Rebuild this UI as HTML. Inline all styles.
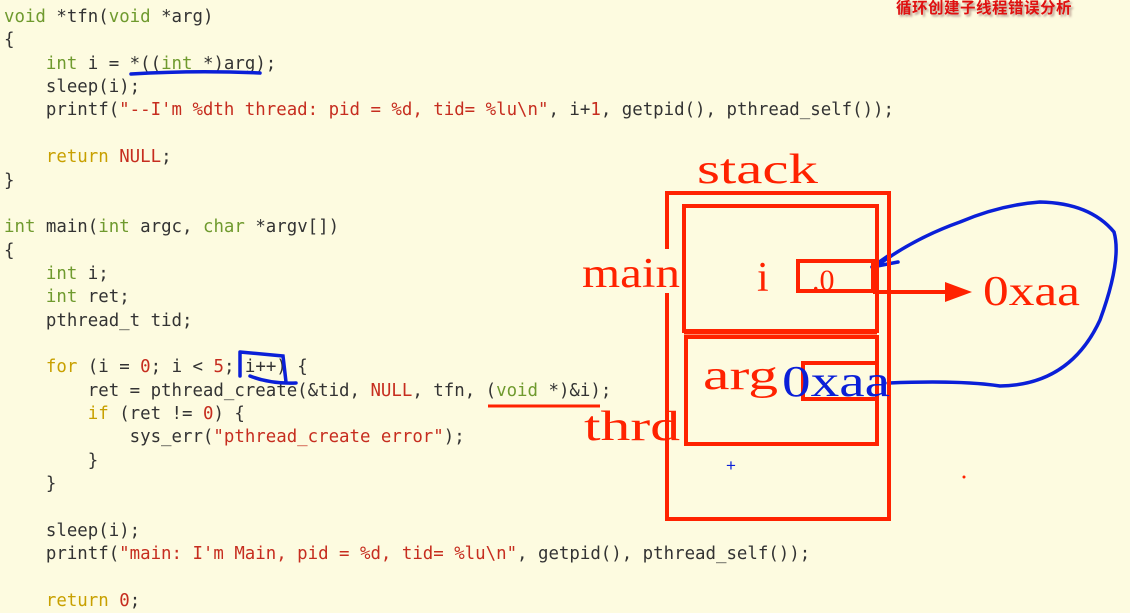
<!DOCTYPE html>
<html><head><meta charset="utf-8"><style>
html,body{margin:0;padding:0;}
body{width:1130px;height:610px;background:#fdfbe0;position:relative;overflow:hidden;}
pre{position:absolute;left:4px;top:6px;margin:0;font-family:"DejaVu Sans Mono","Liberation Mono",monospace;font-size:17.4px;line-height:23.36px;color:#333;}
.k{color:#6f9a2e}.r{color:#c8a000}.s{color:#c62d1f}
.t{position:absolute;left:896px;top:-4px;font-family:"Liberation Sans","Noto Sans CJK SC",sans-serif;font-size:15.5px;color:#e01010;text-shadow:2px 2px 2px rgba(120,60,60,.5);letter-spacing:0.5px;font-weight:bold;}
svg{position:absolute;left:0;top:0;}
</style></head><body>
<pre><span class="k">void</span> *tfn(<span class="k">void</span> *arg)
{
    <span class="k">int</span> i = *((<span class="k">int</span> *)arg);
    sleep(i);
    printf(<span class="s">"--I'm %dth thread: pid = %d, tid= %lu\n"</span>, i+<span class="s">1</span>, getpid(), pthread_self());

    <span class="r">return</span> <span class="s">NULL</span>;
}

<span class="k">int</span> main(<span class="k">int</span> argc, <span class="k">char</span> *argv[])
{
    <span class="k">int</span> i;
    <span class="k">int</span> ret;
    pthread_t tid;

    <span class="r">for</span> (i = <span class="s">0</span>; i &lt; <span class="s">5</span>; i++) {
        ret = pthread_create(&amp;tid, <span class="s">NULL</span>, tfn, (<span class="k">void</span> *)&amp;i);
        <span class="r">if</span> (ret != <span class="s">0</span>) {
            sys_err(<span class="s">"pthread_create error"</span>);
        }
    }

    sleep(i);
    printf(<span class="s">"main: I'm Main, pid = %d, tid= %lu\n"</span>, getpid(), pthread_self());

    <span class="r">return</span> <span class="s">0</span>;</pre>
<div class="t">循环创建子线程错误分析</div>
<svg width="1130" height="610" viewBox="0 0 1130 610">
<g fill="none" stroke="#0a1fd8" stroke-width="3.5" stroke-linecap="round">
<path d="M131 74 Q195 70 260 73"/>
<path d="M240 352 L240 376 M240 352 L283 356 L286 382 M250 376 Q270 384 296 383"/>
<path d="M888 383 Q960 380 1000 386 Q1070 385 1100 320 Q1122 260 1114 232 Q1090 203 1040 202 Q1000 205 960 222 Q915 238 878 265"/>
<path d="M872 267 L888 256 M872 267 L898 262"/>
</g>
<g fill="none" stroke="#ff2200" stroke-width="4">
<path d="M667 249 L667 193 L889 193 L889 519 L667 519 L667 293"/>
<rect x="684" y="206" width="193" height="125"/>
<rect x="686" y="337" width="191" height="107"/>
<path d="M684 332 L877 332" stroke-width="5"/>
<path d="M877 291 L798 291 L798 261 L873 261 L873 290"/>
<path d="M875 363 L803 363 L803 399 L875 399"/>
<path d="M873 292 L950 292"/>
<path d="M488 406 L600 406" stroke-width="3"/>
</g>
<path d="M945 282 L972 292 L945 302 Z" fill="#ff2200"/>
<g font-family="Liberation Serif, serif" fill="#ff2200">
<text x="697" y="183" font-size="42" textLength="121" lengthAdjust="spacingAndGlyphs">stack</text>
<text x="582" y="287" font-size="42" textLength="98" lengthAdjust="spacingAndGlyphs">main</text>
<text x="757" y="291" font-size="42">i</text>
<text x="812" y="290" font-size="30">.0</text>
<text x="983" y="305" font-size="42" textLength="97" lengthAdjust="spacingAndGlyphs">0xaa</text>
<text x="703" y="389" font-size="42" textLength="75" lengthAdjust="spacingAndGlyphs">arg</text>
<text x="584" y="440" font-size="42" textLength="96" lengthAdjust="spacingAndGlyphs">thrd</text>
<circle cx="964" cy="477" r="1.5"/>
</g>
<text x="782" y="396" font-family="Liberation Serif, serif" font-size="44" fill="#0a1fd8" textLength="108" lengthAdjust="spacingAndGlyphs">0xaa</text>
<text x="726" y="471" font-family="Liberation Sans, sans-serif" font-size="17" fill="#0a1fd8">+</text>
</svg>
</body></html>
